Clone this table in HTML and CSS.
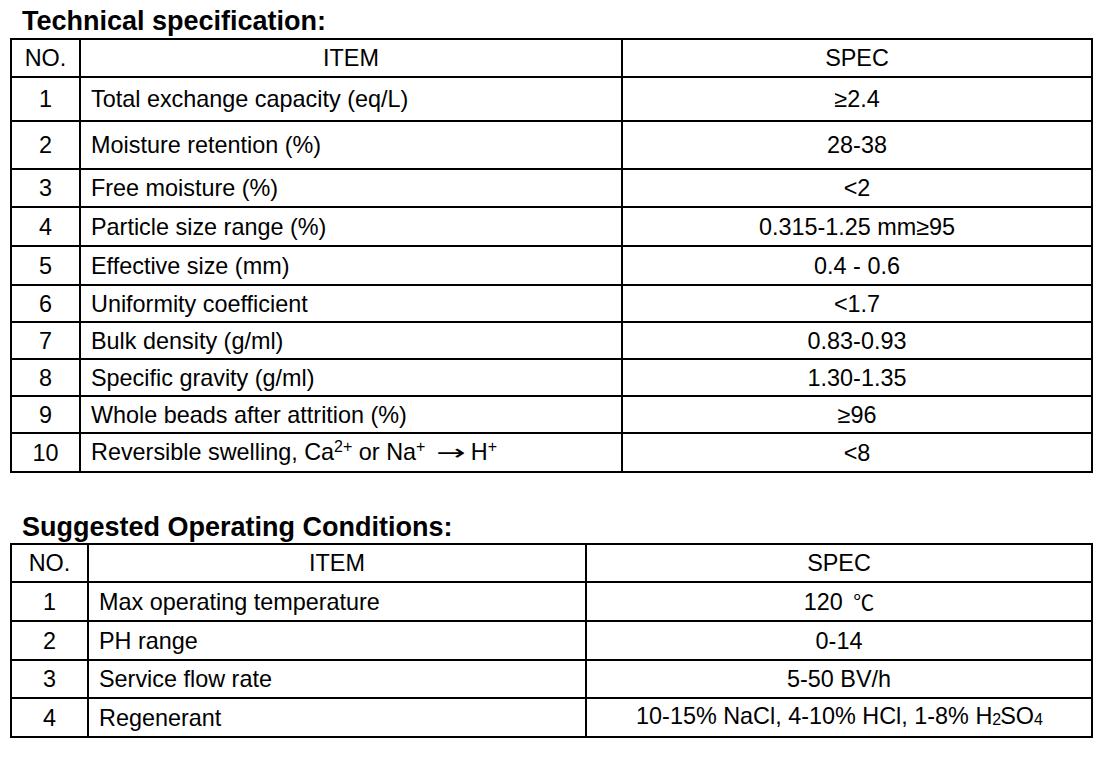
FILE: index.html
```html
<!DOCTYPE html>
<html>
<head>
<meta charset="utf-8">
<link rel="stylesheet" href="styles.css">
</head>
<body>
<div class="page">
  <h2 class="title t1">Technical specification:</h2>
  <table class="spec spec1">
    <colgroup><col class="c-no1"><col class="c-item1"><col></colgroup>
    <tr class="h38"><th>NO.</th><th>ITEM</th><th>SPEC</th></tr>
    <tr class="h44"><td class="no">1</td><td class="item">Total exchange capacity (eq/L)</td><td class="val">≥2.4</td></tr>
    <tr class="h48"><td class="no">2</td><td class="item">Moisture retention (%)</td><td class="val">28-38</td></tr>
    <tr class="h38"><td class="no">3</td><td class="item">Free moisture (%)</td><td class="val">&lt;2</td></tr>
    <tr class="h39"><td class="no">4</td><td class="item">Particle size range (%)</td><td class="val">0.315-1.25 mm≥95</td></tr>
    <tr class="h39"><td class="no">5</td><td class="item">Effective size (mm)</td><td class="val">0.4 - 0.6</td></tr>
    <tr class="h37"><td class="no">6</td><td class="item">Uniformity coefficient</td><td class="val">&lt;1.7</td></tr>
    <tr class="h37"><td class="no">7</td><td class="item">Bulk density (g/ml)</td><td class="val">0.83-0.93</td></tr>
    <tr class="h37"><td class="no">8</td><td class="item">Specific gravity (g/ml)</td><td class="val">1.30-1.35</td></tr>
    <tr class="h37"><td class="no">9</td><td class="item">Whole beads after attrition (%)</td><td class="val">≥96</td></tr>
    <tr class="h39"><td class="no">10</td><td class="item">Reversible swelling, Ca<sup>2+</sup> or Na<sup>+</sup> <span class="arrow">→</span> H<sup>+</sup></td><td class="val">&lt;8</td></tr>
  </table>

  <h2 class="title t2">Suggested Operating Conditions:</h2>
  <table class="spec spec2">
    <colgroup><col class="c-no2"><col class="c-item2"><col></colgroup>
    <tr class="h38"><th>NO.</th><th>ITEM</th><th>SPEC</th></tr>
    <tr class="h39"><td class="no">1</td><td class="item">Max operating temperature</td><td class="val">120 <span class="deg">℃</span></td></tr>
    <tr class="h39"><td class="no">2</td><td class="item">PH range</td><td class="val">0-14</td></tr>
    <tr class="h38"><td class="no">3</td><td class="item">Service flow rate</td><td class="val">5-50 BV/h</td></tr>
    <tr class="h39"><td class="no">4</td><td class="item">Regenerant</td><td class="val">10-15% NaCl, 4-10% HCl, 1-8% H<span class="sub">2</span>SO<span class="sub">4</span></td></tr>
  </table>
</div>
</body>
</html>
```

FILE: styles.css
```css
html, body {
  margin: 0;
  padding: 0;
  background: #ffffff;
}
body {
  font-family: "Liberation Sans", Arial, sans-serif;
  color: #000;
}
.page {
  padding: 6px 17px 0 10px;
}
.title {
  margin: 0;
  padding-left: 12px;
  font-size: 27px;
  font-weight: bold;
  line-height: 30px;
  height: 32px;
}
.t2 {
  margin-top: 39px;
  height: 31px;
}
.spec {
  border-collapse: collapse;
  table-layout: fixed;
  width: 1083px;
  font-size: 23.4px;
  border: 2px solid #000;
}
.spec th, .spec td {
  border: 2px solid #000;
  padding: 0;
  font-weight: normal;
  text-align: center;
  vertical-align: middle;
  line-height: 26px;
  white-space: nowrap;
}
.spec td.item {
  text-align: left;
  padding-left: 10px;
}
.c-no1 { width: 69px; }
.c-item1 { width: 542px; }
.c-no2 { width: 77px; }
.c-item2 { width: 498px; }
.h37 { height: 37px; }
.h38 { height: 38px; }
.h39 { height: 39px; }
.h40 { height: 40px; }
.h44 { height: 44px; }
.h48 { height: 48px; }
sup {
  font-size: 16px;
  line-height: 0;
  vertical-align: 8px;
}
.arrow {
  display: inline-block;
  margin: 0 4px 0 10px;
  font-family: "DejaVu Sans", sans-serif;
  font-size: 22px;
  transform: scaleX(1.6);
}
.sub {
  font-size: 16px;
  letter-spacing: -1px;
  vertical-align: -1px;
}
.deg {
  font-family: "Noto Sans CJK SC", sans-serif;
  font-size: 21px;
  margin-left: 4px;
}
```
